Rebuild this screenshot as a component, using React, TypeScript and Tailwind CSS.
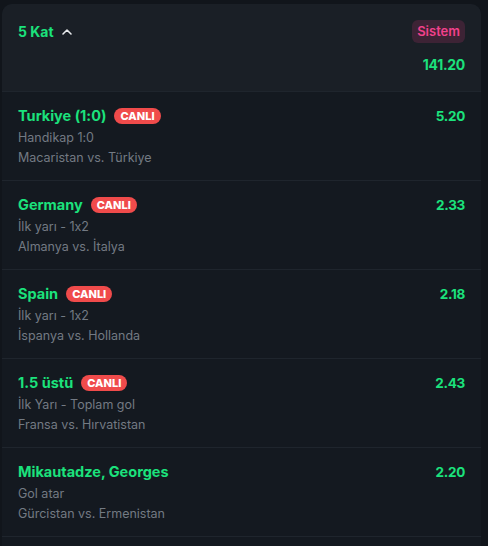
import React from 'react';

const BETS = [
  { title: 'Turkiye (1:0)', live: true, market: 'Handikap 1:0', match: 'Macaristan vs. Türkiye', odds: '5.20' },
  { title: 'Germany', live: true, market: 'İlk yarı - 1x2', match: 'Almanya vs. İtalya', odds: '2.33' },
  { title: 'Spain', live: true, market: 'İlk yarı - 1x2', match: 'İspanya vs. Hollanda', odds: '2.18' },
  { title: '1.5 üstü', live: true, market: 'İlk Yarı - Toplam gol', match: 'Fransa vs. Hırvatistan', odds: '2.43' },
  { title: 'Mikautadze, Georges', live: false, market: 'Gol atar', match: 'Gürcistan vs. Ermenistan', odds: '2.20' },
];

const ChevronUp = () => (
  <svg width="12" height="12" viewBox="0 0 12 12" fill="none" className="ml-[7px]">
    <path d="M2 8 L6 4 L10 8" stroke="#e6e8eb" strokeWidth="1.6" strokeLinecap="round" strokeLinejoin="round" />
  </svg>
);

const BetRow: React.FC<{ bet: (typeof BETS)[number] }> = ({ bet }) => (
  <div className="flex h-[89px] justify-between border-b border-[#1f252d] bg-[#141920] px-4 pt-[14px]">
    <div className="flex flex-col">
      <div className="flex h-5 items-center">
        <span className="text-[14.5px] font-bold text-[#1be27c]">{bet.title}</span>
        {bet.live && (
          <span className="ml-2 rounded-full bg-[#f04b4b] px-[6px] text-[11px] font-extrabold leading-[16px] text-white">
            CANLI
          </span>
        )}
      </div>
      <span className="mt-[2px] text-[12.5px] leading-5 text-[#737a83]">{bet.market}</span>
      <span className="text-[12.5px] leading-5 text-[#737a83]">{bet.match}</span>
    </div>
    <span className="text-[13.5px] font-bold leading-5 tracking-[-0.3px] text-[#1be27c]">{bet.odds}</span>
  </div>
);

export default function App() {
  return (
    <div
      className="h-[546px] w-[488px] overflow-hidden bg-[#11151b] pl-[2px] pr-[7px] pt-1 [font-feature-settings:'calt'_0]"
      style={{ fontFamily: 'Inter, "Noto Sans", sans-serif' }}
    >
      <div className="overflow-hidden rounded-t-[10px] bg-[#141920]">
        <div className="flex h-[88px] justify-between border-b border-[#1f252d] bg-[#1a1f26] px-4 pt-4">
          <div className="flex h-[23px] items-center">
            <span className="text-[14px] font-bold text-[#1be27c]">5 Kat</span>
            <ChevronUp />
          </div>
          <div className="flex flex-col items-end">
            <span className="rounded-md bg-[#3d2335] px-[5px] text-[13px] font-semibold leading-[23px] text-[#f2418c]">Sistem</span>
            <span className="mt-[12px] text-[14px] font-bold leading-5 tracking-[-0.3px] text-[#1be27c]">141.20</span>
          </div>
        </div>
        {BETS.map((bet) => (
          <BetRow key={bet.title} bet={bet} />
        ))}
        <div className="h-10" />
      </div>
    </div>
  );
}
